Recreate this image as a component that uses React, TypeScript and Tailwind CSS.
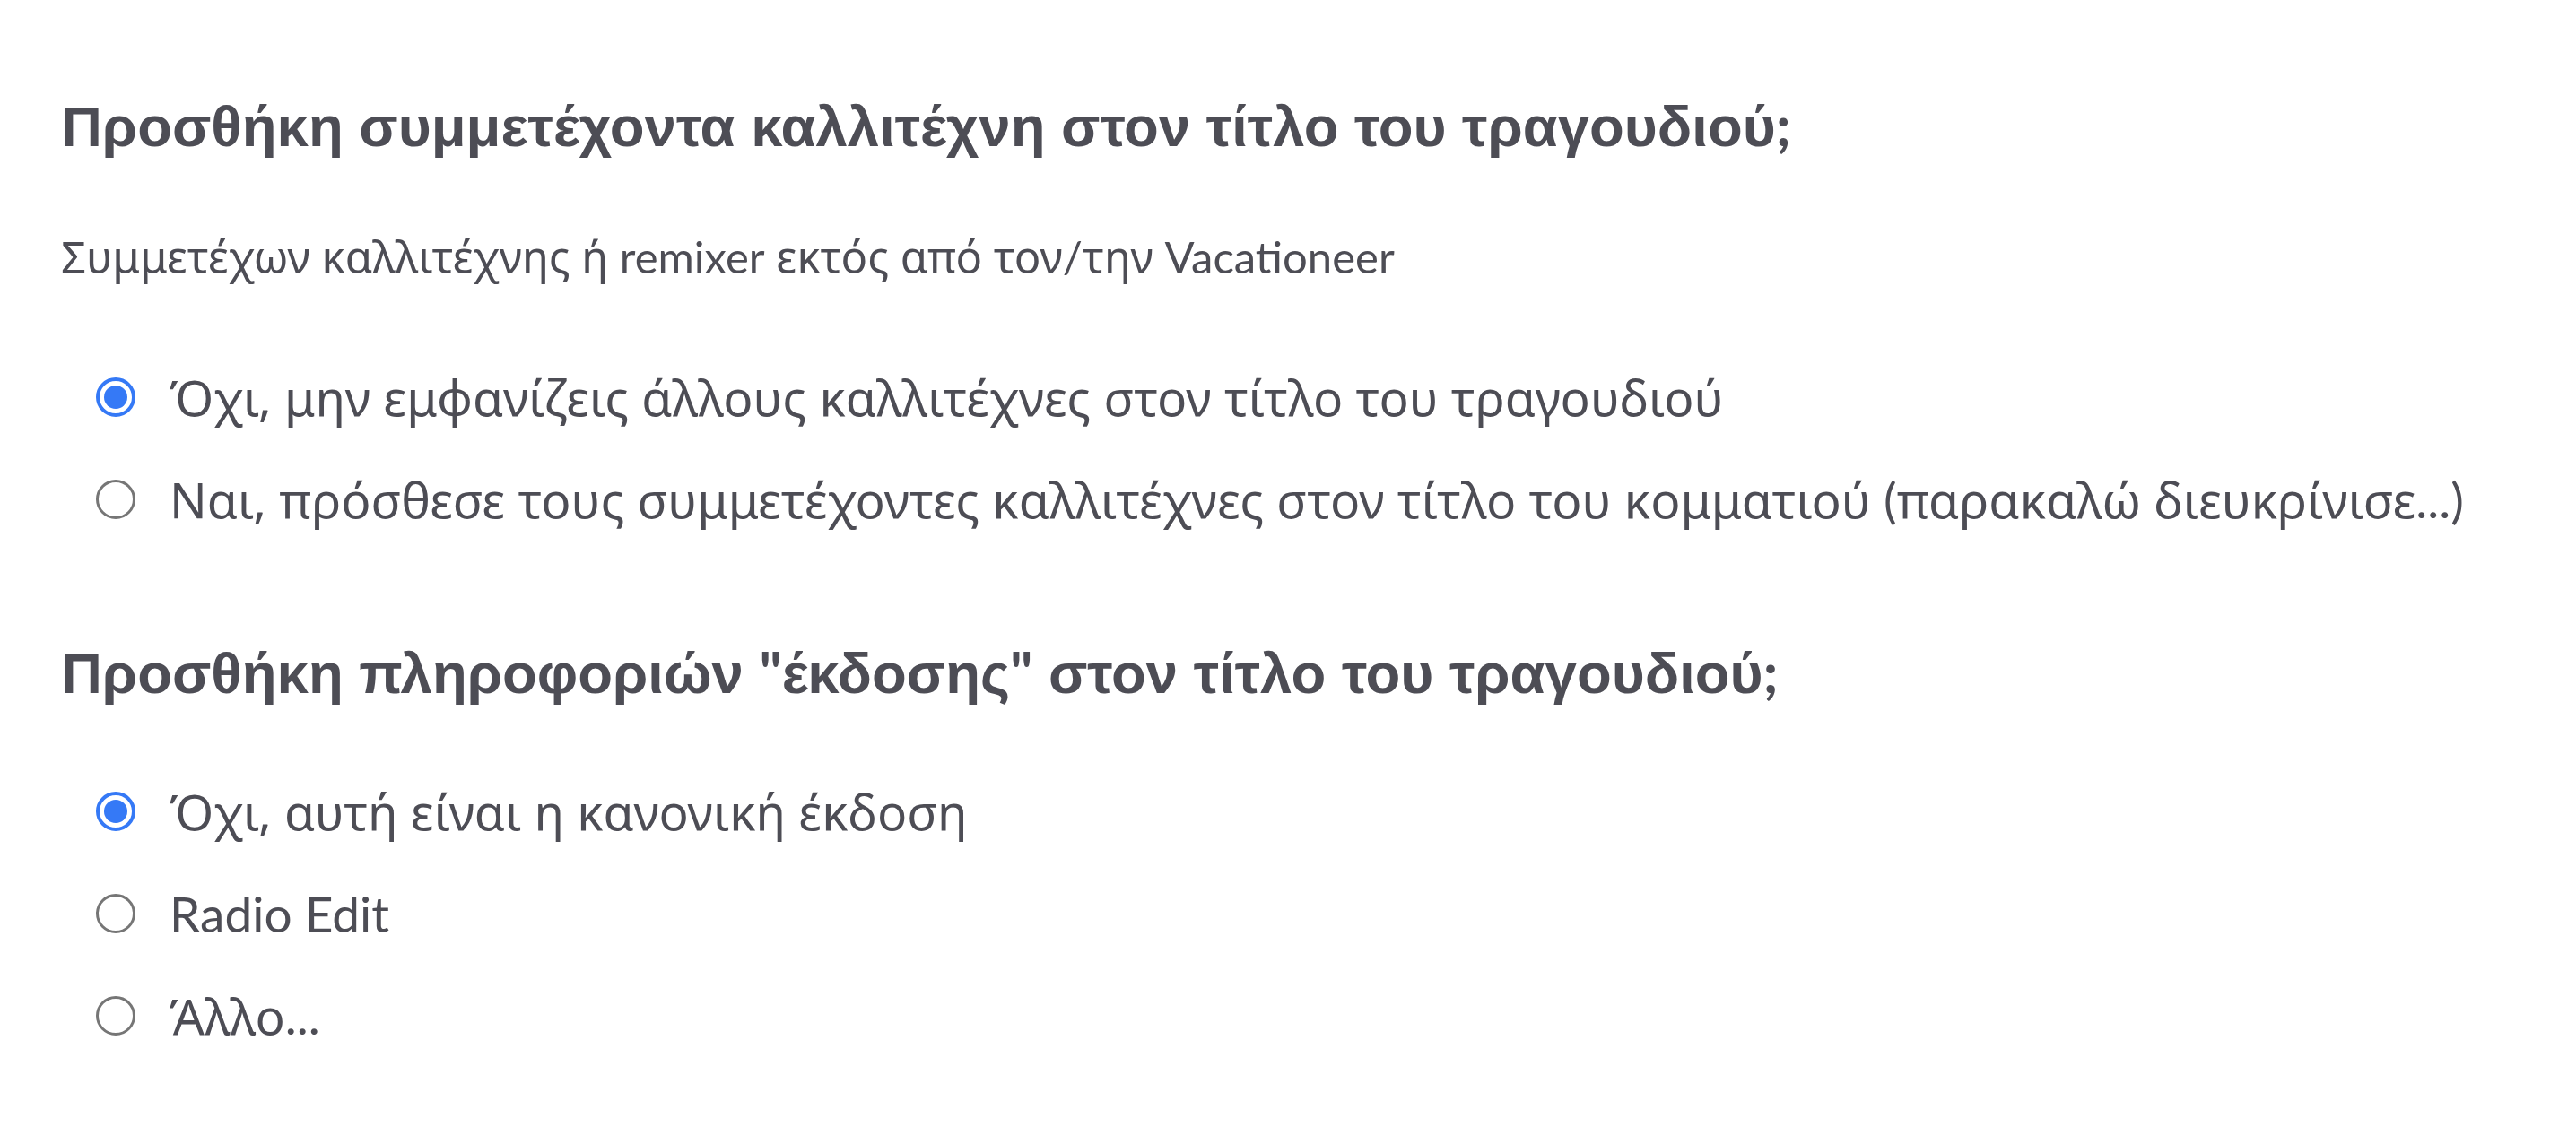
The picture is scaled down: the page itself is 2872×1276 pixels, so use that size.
import React from 'react';

type Option = { label: React.ReactNode; checked?: boolean };

// Latin runs are set in Lato, the Greek falls back to a wider sans
const Latin: React.FC<{ children: React.ReactNode }> = ({ children }) => (
    <span className="font-['Lato',sans-serif]">{children}</span>
);

const Radio: React.FC<{ checked?: boolean }> = ({ checked }) =>
    checked ? (
        <span className="flex h-[44px] w-[44px] shrink-0 items-center justify-center rounded-full border-[4px] border-[#3579f6] bg-white">
            <span className="h-[26px] w-[26px] rounded-full bg-[#3579f6]" />
        </span>
    ) : (
        <span className="h-[44px] w-[44px] shrink-0 rounded-full border-[3px] border-[#767676] bg-white" />
    );

const OptionRow: React.FC<Option> = ({ label, checked }) => (
    <label className="flex h-[114px] items-center gap-[38px] pl-[39px]">
        <Radio checked={checked} />
        <span className="text-[55px] leading-[64px] text-[#4d4d55]">{label}</span>
    </label>
);

const featuredOptions: Option[] = [
    { label: 'Όχι, μην εμφανίζεις άλλους καλλιτέχνες στον τίτλο του τραγουδιού', checked: true },
    {
        label: (
            <>
                Ναι, πρόσθεσε τους συμμετέχοντες καλλιτέχνες στον τίτλο του κομματιού <Latin>(</Latin>παρακαλώ
                διευκρίνισε<Latin>...)</Latin>
            </>
        ),
    },
];

const versionOptions: Option[] = [
    { label: 'Όχι, αυτή είναι η κανονική έκδοση', checked: true },
    { label: <Latin>Radio Edit</Latin> },
    { label: <>Άλλο<Latin>...</Latin></> },
];

export default function App() {
    return (
        <div className="min-h-screen bg-white pl-[68px] pt-[103px] font-['Noto_Sans',sans-serif] text-[#4d4d55]">
            <h2 className="font-['Liberation_Sans',sans-serif] text-[63.5px] font-bold leading-[72px]">
                Προσθήκη συμμετέχοντα καλλιτέχνη στον τίτλο του τραγουδιού<Latin>;</Latin>
            </h2>
            <p className="mt-[81px] text-[49px] leading-[56px]">
                Συμμετέχων καλλιτέχνης ή <Latin>remixer</Latin> εκτός από τον<Latin>/</Latin>την{' '}
                <Latin>Vacationeer</Latin>
            </p>
            <div className="mt-[72px] flex flex-col">
                {featuredOptions.map((o, i) => (
                    <OptionRow key={i} {...o} />
                ))}
            </div>

            <h2 className="mt-[99px] font-['Liberation_Sans',sans-serif] text-[63.5px] font-bold leading-[72px]">
                Προσθήκη πληροφοριών <Latin>"</Latin>έκδοσης<Latin>"</Latin> στον τίτλο του τραγουδιού
                <Latin>;</Latin>
            </h2>
            <div className="mt-[61px] flex flex-col">
                {versionOptions.map((o, i) => (
                    <OptionRow key={i} {...o} />
                ))}
            </div>
        </div>
    );
}
